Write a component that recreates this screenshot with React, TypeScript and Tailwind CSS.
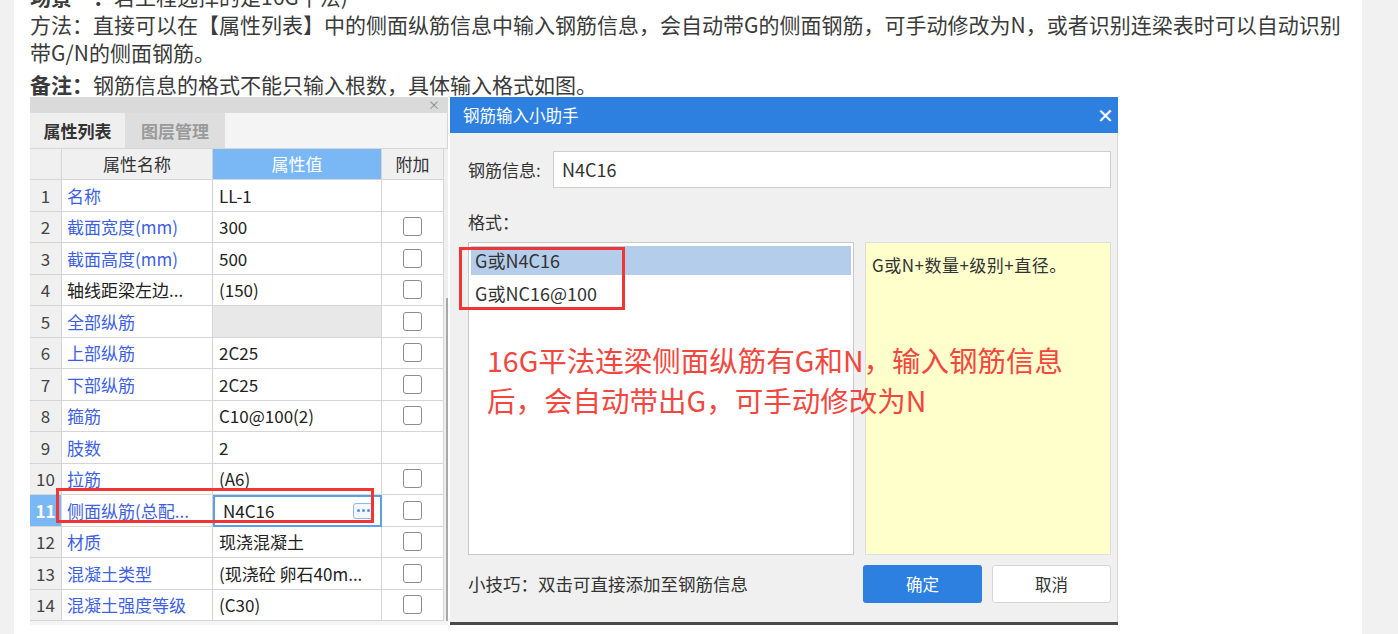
import React from "react";

const FONT = { fontFamily: '"Noto Sans CJK SC", "Noto Sans", sans-serif' };

type Row = {
  n: number;
  name: string;
  value: string;
  check: boolean;
  black?: boolean;
  greyValue?: boolean;
};

const rows: Row[] = [
  { n: 1, name: "名称", value: "LL-1", check: false },
  { n: 2, name: "截面宽度(mm)", value: "300", check: true },
  { n: 3, name: "截面高度(mm)", value: "500", check: true },
  { n: 4, name: "轴线距梁左边...", value: "(150)", check: true, black: true },
  { n: 5, name: "全部纵筋", value: "", check: true, greyValue: true },
  { n: 6, name: "上部纵筋", value: "2C25", check: true },
  { n: 7, name: "下部纵筋", value: "2C25", check: true },
  { n: 8, name: "箍筋", value: "C10@100(2)", check: true },
  { n: 9, name: "肢数", value: "2", check: false },
  { n: 10, name: "拉筋", value: "(A6)", check: true },
  { n: 11, name: "侧面纵筋(总配...", value: "N4C16", check: true },
  { n: 12, name: "材质", value: "现浇混凝土", check: true },
  { n: 13, name: "混凝土类型", value: "(现浇砼 卵石40m...", check: true },
  { n: 14, name: "混凝土强度等级", value: "(C30)", check: true },
];

function Checkbox() {
  return <div className="w-[19px] h-[19px] rounded-[3px] border border-[#8c8c8c] bg-white" />;
}

function PropertyPanel() {
  return (
    <div className="relative w-[418px] h-[528px] bg-[#f4f4f4] flex flex-col text-[17px] text-[#222]">
      {/* title strip */}
      <div className="h-[16px] bg-[#dadada] flex items-center justify-end pr-[8px] text-[#8a8a8a] text-[12px] leading-[12px]">
        ×
      </div>
      {/* tabs */}
      <div className="h-[35px] flex border-r border-[#d5d5d5]">
        <div className="w-[95px] flex items-center justify-center font-bold text-[17px] text-[#333] bg-[#efefef]">
          属性列表
        </div>
        <div className="w-[100px] flex items-center justify-center font-bold text-[17px] text-[#9a9a9a] bg-[#dedede]">
          图层管理
        </div>
        <div className="flex-1 bg-[#f4f4f4]" />
      </div>
      {/* header */}
      <div className="flex h-[32px] border-t border-[#d5d5d5]">
        <div className="w-[32px] bg-[#f0f0f0] border-r border-b border-[#d5d5d5]" />
        <div className="w-[151px] bg-[#f0f0f0] border-r border-b border-[#d5d5d5] flex items-center justify-center text-[#333]">
          属性名称
        </div>
        <div className="w-[169px] bg-[#7ab8f5] border-r border-b border-[#d5d5d5] flex items-center justify-center text-white">
          属性值
        </div>
        <div className="w-[62px] bg-[#f0f0f0] border-r border-b border-[#d5d5d5] flex items-center justify-center text-[#333]">
          附加
        </div>
        <div className="flex-1 bg-[#f0f0f0]" />
      </div>
      {/* rows */}
      <div className="flex">
        <div className="flex flex-col">
          {rows.map((r) => {
            const sel = r.n === 11;
            return (
              <div key={r.n} className="flex h-[31.5px]">
                <div
                  className={
                    sel
                      ? "w-[32px] bg-[#7ab8f5] text-white font-bold border-r border-b border-[#d5d5d5] flex items-center justify-center"
                      : "w-[32px] bg-[#f0f0f0] text-[#444] border-r border-b border-[#d5d5d5] flex items-center justify-center"
                  }
                >
                  {r.n}
                </div>
                <div
                  className={
                    r.black
                      ? "w-[151px] bg-white border-r border-b border-[#d5d5d5] flex items-center pl-[5px] text-[#222] whitespace-nowrap overflow-hidden"
                      : "w-[151px] bg-white border-r border-b border-[#d5d5d5] flex items-center pl-[5px] text-[#3d5fe3] whitespace-nowrap overflow-hidden"
                  }
                >
                  {r.name}
                </div>
                {sel ? (
                  <div className="w-[169px] bg-white border-2 border-[#5b9fe6] flex items-center pl-[8px] pr-[6px] justify-between">
                    <span className="text-[#222]">{r.value}</span>
                    <span className="w-[21px] h-[16px] rounded-[3px] border border-[#8fb8e8] bg-[#f3f8ff] flex items-center justify-center gap-[2px]">
                      <span className="w-[3px] h-[3px] rounded-full bg-[#5b8fd8]" />
                      <span className="w-[3px] h-[3px] rounded-full bg-[#5b8fd8]" />
                      <span className="w-[3px] h-[3px] rounded-full bg-[#5b8fd8]" />
                    </span>
                  </div>
                ) : (
                  <div
                    className={
                      r.greyValue
                        ? "w-[169px] bg-[#e8e8e8] border-r border-b border-[#d5d5d5] flex items-center pl-[6px]"
                        : "w-[169px] bg-white border-r border-b border-[#d5d5d5] flex items-center pl-[6px] whitespace-nowrap overflow-hidden"
                    }
                  >
                    {r.value}
                  </div>
                )}
                <div className="w-[62px] bg-white border-r border-b border-[#d5d5d5] flex items-center justify-center">
                  {r.check && <Checkbox />}
                </div>
              </div>
            );
          })}
        </div>
        <div className="flex-1 flex flex-col bg-[#efefef]">
          <div className="h-[118px]" />
          <div className="w-[2px] ml-[2px] flex-1 bg-[#a8a8a8]" />
        </div>
      </div>
      {/* red highlight */}
      <div className="absolute left-[26px] top-[391px] w-[318px] h-[35px] border-[3px] border-[#f03535]" />
    </div>
  );
}

function Dialog() {
  return (
    <div className="relative w-[668px] h-[528px] flex flex-col text-[17px]">
      <div className="h-[36px] bg-[#2d80e0] flex items-center justify-between pl-[13px] pr-[4px] text-white">
        <span className="text-[16.5px]">钢筋输入小助手</span>
        <span className="text-[20px] leading-none">✕</span>
      </div>
      <div className="flex-1 bg-[#f0f0f0] border-r border-[#d8d8d8] flex flex-col pl-[18px] pr-[6px] pt-[18px] text-[#333]">
        <div className="flex items-center h-[37px]">
          <span className="w-[85px]">钢筋信息:</span>
          <div className="flex-1 h-[37px] bg-white border border-[#cfcfcf] flex items-center pl-[8px] text-[#333] text-[18px]">
            N4C16
          </div>
        </div>
        <div className="mt-[20px] h-[28px] flex items-center">格式：</div>
        <div className="mt-[6px] flex gap-[11px] h-[313px]">
          <div className="w-[386px] bg-white border border-[#c8c8c8] pt-[3px] px-[2px] text-[18px]">
            <div className="h-[29px] bg-[#b3cdeb] flex items-center pl-[4px]">G或N4C16</div>
            <div className="h-[36px] flex items-center pl-[4px]">G或NC16@100</div>
          </div>
          <div className="flex-1 bg-[#ffffcc] border border-[#dddddd] pt-[9px] pl-[6px] text-[17px] tracking-[0.5px] text-[#333]">
            G或N+数量+级别+直径。
          </div>
        </div>
        <div className="mt-[10px] flex items-center">
          <span className="flex-1 text-[17.5px]">小技巧：双击可直接添加至钢筋信息</span>
          <button className="w-[119px] h-[38px] rounded-[3px] bg-[#2d80e0] text-white text-[16.5px]">确定</button>
          <button className="ml-[10px] w-[119px] h-[38px] rounded-[3px] bg-white border border-[#d6d6d6] text-[#333] text-[16.5px]">
            取消
          </button>
        </div>
        <div className="flex-1" />
      </div>
      <div className="h-[3px] bg-[#4a4a4a]" />
      {/* red annotations */}
      <div className="absolute left-[9px] top-[150px] w-[166px] h-[63px] border-[3px] border-[#f03535]" />
      <div className="absolute left-[37px] top-[243px] text-[28.5px] leading-[40px] text-[#f2473f] whitespace-nowrap">
        <div>16G平法连梁侧面纵筋有G和N，输入钢筋信息</div>
        <div>后，会自动带出G，可手动修改为N</div>
      </div>
    </div>
  );
}

export default function App() {
  return (
    <div className="w-full h-[634px] overflow-hidden bg-[#f1f1f1] flex" style={FONT}>
      <div className="ml-[14px] w-[1348px] h-full bg-white pl-[16px] overflow-hidden">
        <div className="mt-[-18px] text-[21px] leading-[28px] text-[#3a3a3a] whitespace-nowrap">
          <div>
            <span className="font-bold">场景一：</span>若工程选择的是16G平法)
          </div>
          <div>方法：直接可以在【属性列表】中的侧面纵筋信息中输入钢筋信息，会自动带G的侧面钢筋，可手动修改为N，或者识别连梁表时可以自动识别</div>
          <div>带G/N的侧面钢筋。</div>
          <div className="mt-[4px]">
            <span className="font-bold">备注：</span>钢筋信息的格式不能只输入根数，具体输入格式如图。
          </div>
        </div>
        <div className="mt-[-1px] flex gap-[2px]">
          <PropertyPanel />
          <Dialog />
        </div>
      </div>
    </div>
  );
}
